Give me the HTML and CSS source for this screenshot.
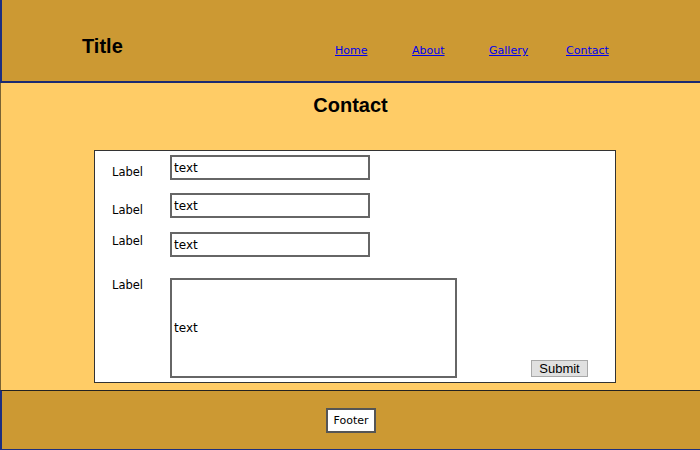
FILE: index.html
```html
<!DOCTYPE html>
<html>
<head>
<meta charset="utf-8">
<link rel="stylesheet" href="styles.css">
</head>
<body>
<header class="top">
  <div class="title">Title</div>
  <nav class="nav">
    <a href="#">Home</a>
    <a href="#">About</a>
    <a href="#">Gallery</a>
    <a href="#">Contact</a>
  </nav>
</header>
<main class="main">
  <h1 class="heading">Contact</h1>
  <div class="form">
    <div class="row r1">
      <div class="label">Label</div>
      <div class="field">text</div>
    </div>
    <div class="row r2">
      <div class="label">Label</div>
      <div class="field">text</div>
    </div>
    <div class="row r3">
      <div class="label l3">Label</div>
      <div class="field">text</div>
    </div>
    <div class="row r4">
      <div class="label l4">Label</div>
      <div class="field area">text</div>
      <button class="submit">Submit</button>
    </div>
  </div>
</main>
<footer class="foot">
  <div class="footbox">Footer</div>
</footer>
</body>
</html>
```
FILE: styles.css
```css
html, body {
  margin: 0;
  padding: 0;
}
body {
  width: 700px;
  height: 450px;
  overflow: hidden;
  font-family: "Liberation Sans", Arial, sans-serif;
}
.top {
  box-sizing: border-box;
  height: 83px;
  background: #cc9933;
  border-left: 2px solid #1c2f80;
  border-bottom: 2px solid #1c2a70;
  display: grid;
  grid-template-columns: 253px repeat(4, 77px);
  align-items: start;
  padding-left: 80px;
  padding-top: 34px;
}
.title {
  font-weight: bold;
  font-size: 20px;
  line-height: 24px;
  color: #000;
}
.nav {
  display: contents;
}
.nav a {
  margin-top: 10px;
  font-family: "DejaVu Sans", sans-serif;
  font-size: 11px;
  line-height: 14px;
  color: #0000ee;
  text-decoration: underline;
}
.main {
  box-sizing: border-box;
  height: 307px;
  background: #ffcc66;
  border-left: 1px solid #7a6232;
  padding-top: 10px;
  display: flex;
  flex-direction: column;
}
.heading {
  margin: 0;
  text-align: center;
  font-size: 20px;
  line-height: 24px;
  font-weight: bold;
  color: #000;
}
.form {
  box-sizing: border-box;
  margin-top: 33px;
  margin-left: 93px;
  width: 522px;
  height: 233px;
  background: #fff;
  border: 1px solid #333;
  padding-top: 4px;
  display: flex;
  flex-direction: column;
  font-family: "DejaVu Sans", sans-serif;
  color: #000;
}
.row {
  display: flex;
  align-items: flex-start;
}
.r2 { margin-top: 13px; }
.r3 { margin-top: 14px; }
.r4 { margin-top: 21px; flex: 1; }
.label {
  width: 58px;
  margin-left: 17px;
  padding-top: 10px;
  font-size: 11.5px;
  line-height: 14px;
}
.l3 { padding-top: 2px; }
.l4 { padding-top: 0; }
.field {
  box-sizing: border-box;
  width: 200px;
  height: 25px;
  border: 2px solid #666;
  display: flex;
  align-items: center;
  padding-left: 2px;
  font-size: 12px;
}
.field.area {
  width: 287px;
  height: 100px;
}
.submit {
  align-self: flex-end;
  margin: 0 27px 5px auto;
  box-sizing: border-box;
  width: 57px;
  height: 17px;
  padding: 0;
  background: #e0e0e0;
  border: 1px solid #a8a8a8;
  border-radius: 0;
  font-family: "Liberation Sans", Arial, sans-serif;
  font-size: 13px;
  line-height: 15px;
  color: #000;
}
.foot {
  box-sizing: border-box;
  height: 60px;
  background: #cc9933;
  border-top: 1px solid #222;
  border-left: 2px solid #1c2f80;
  border-bottom: 1px solid #1c2f80;
  display: flex;
  align-items: center;
  justify-content: center;
}
.footbox {
  box-sizing: border-box;
  width: 50px;
  height: 25px;
  background: #fff;
  border: 2px solid #555;
  display: flex;
  align-items: center;
  justify-content: center;
  font-family: "DejaVu Sans", sans-serif;
  font-size: 11px;
  color: #000;
}
```
